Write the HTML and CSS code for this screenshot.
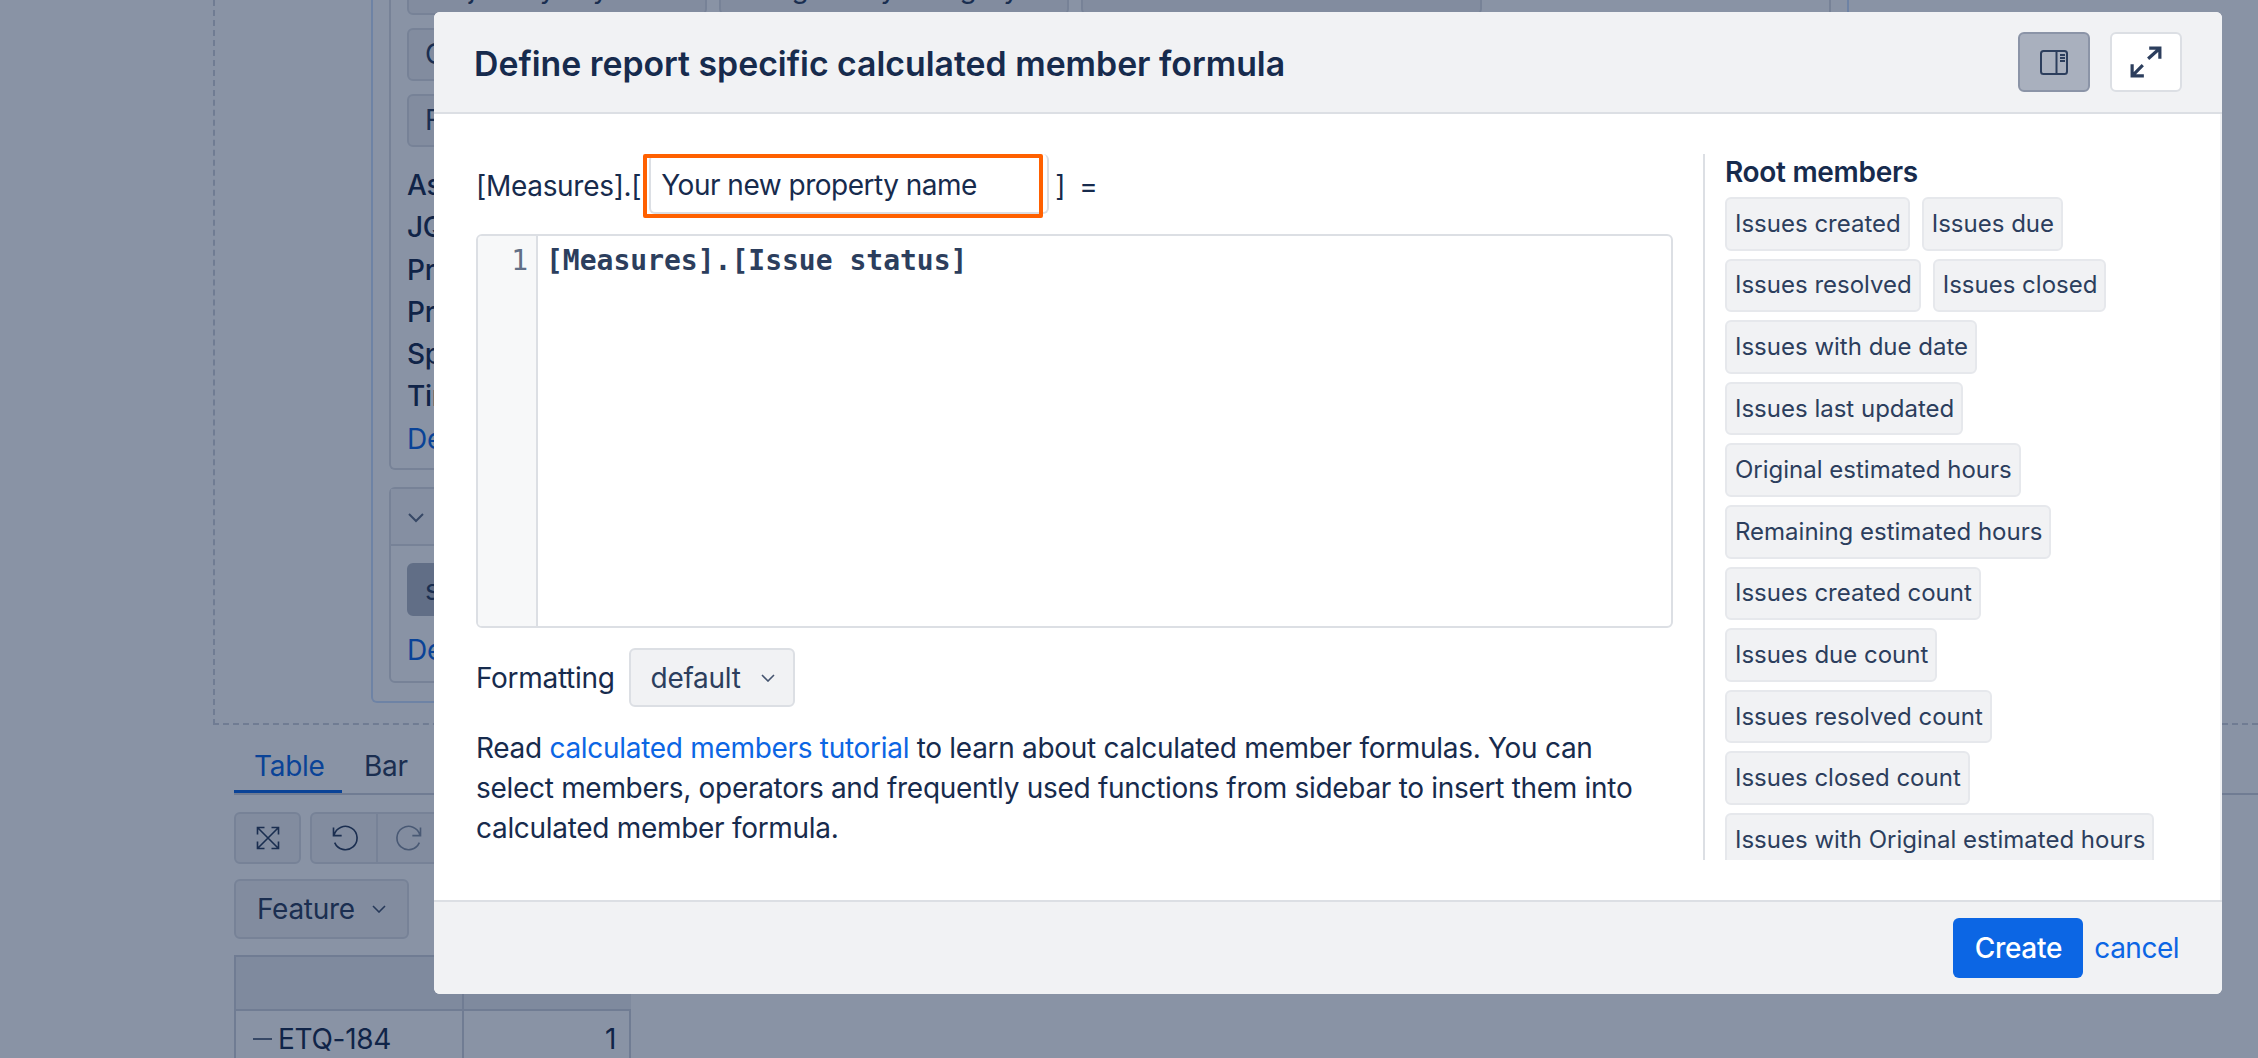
FILE: index.html
```html
<!DOCTYPE html>
<html lang="en">
<head>
<meta charset="utf-8">
<title>Define report specific calculated member formula</title>
<link rel="stylesheet" href="styles.css">
</head>
<body>
<div class="app">
  <div class="stage">
    <div class="blue-panel">
      <div class="panel panel-one">
        <div class="chip-row">
          <span class="bg-chip w300">Project by key</span>
          <span class="bg-chip w350">Assignee by category</span>
          <span class="bg-chip w401"></span>
        </div>
        <div class="chip-row"><span class="bg-chip w300">Creator</span></div>
        <div class="chip-row"><span class="bg-chip w300">Fix version</span></div>
        <ul class="labels">
          <li>Assignee</li>
          <li>JQL query</li>
          <li>Project</li>
          <li>Priority</li>
          <li>Sprint</li>
          <li>Time</li>
          <li class="bg-link">Details</li>
        </ul>
      </div>
      <div class="panel panel-two">
        <div class="panel-head">
          <svg class="chev-bg" viewBox="0 0 16 10"><path d="M1 1l7 7 7-7"/></svg>
        </div>
        <div class="panel-content">
          <span class="bg-chip w300 bg-chip-strong">sprint</span>
          <div class="bg-link">Details</div>
        </div>
      </div>
    </div>
  </div>
  <div class="below">
    <div class="tabs">
      <span class="tab tab-active">Table</span>
      <span class="tab">Bar</span>
    </div>
    <div class="toolbar">
      <span class="tool">
        <svg viewBox="0 0 24 24" class="tool-icon"><path d="M3 3l18 18M21 3L3 21M3 9V3h6M15 3h6v6M21 15v6h-6M9 21H3v-6"/></svg>
      </span>
      <span class="tool-group">
        <span class="tool-cell">
          <svg viewBox="0 0 24 24" class="tool-icon"><path d="M3 3v7h7M3.5 9.5A10 10 0 1 1 4 16"/></svg>
        </span>
        <span class="tool-cell tool-off">
          <svg viewBox="0 0 24 24" class="tool-icon"><path d="M21 3v7h-7M20.500 9.500A10 10 0 1 0 20 16"/></svg>
        </span>
      </span>
    </div>
    <div class="feature">Feature
      <svg class="chev" viewBox="0 0 14 8"><path d="M1 1l6 6 6-6"/></svg>
    </div>
    <div class="bg-table">
      <div class="bg-head"></div>
      <div class="bg-head bg-head-text">Issues</div>
      <div class="bg-cell"><span class="dash"></span>ETQ-184</div>
      <div class="bg-cell bg-num">1</div>
    </div>
  </div>
  <div class="overlay"></div>
</div>

<section class="modal">
  <header class="modal-head">
    <h1 class="modal-title">Define report specific calculated member formula</h1>
    <div class="head-actions">
      <button class="icon-btn icon-btn-on" type="button" aria-label="Toggle sidebar">
        <svg class="icon-panel" viewBox="0 0 28 25"><rect x="1" y="1" width="26" height="23" rx="2.500"/><path d="M16.500 1v23M20 5h5M20 8h5M20 11h5"/></svg>
      </button>
      <button class="icon-btn" type="button" aria-label="Full screen">
        <svg class="icon-expand" viewBox="0 0 30 30"><path d="M17 12L27 3M18 2h10v10M12 18L3 27M2 17v11h11"/></svg>
      </button>
    </div>
  </header>
  <div class="modal-body">
    <div class="main-col">
      <div class="name-row">
        <span class="name-text">[Measures].[</span>
        <span class="name-field">
          <input class="name-input" type="text" value="Your new property name">
          <span class="highlight"></span>
        </span>
        <span class="name-text bracket">]</span>
        <span class="name-text equals">=</span>
      </div>
      <div class="editor">
        <div class="gutter">1</div>
        <div class="code">[Measures].[Issue status]</div>
      </div>
      <div class="format-row">
        <span>Formatting</span>
        <span class="select">default
          <svg class="chev" viewBox="0 0 14 8"><path d="M1 1l6 6 6-6"/></svg>
        </span>
      </div>
      <p class="help">Read <a href="#" class="link">calculated members tutorial</a> to learn about calculated member formulas. You can select members, operators and frequently used functions from sidebar to insert them into calculated member formula.</p>
    </div>
    <aside class="side">
      <h2 class="side-title">Root members</h2>
      <div class="chips">
        <span class="chip">Issues created</span>
        <span class="chip">Issues due</span>
        <span class="chip">Issues resolved</span>
        <span class="chip">Issues closed</span>
        <span class="chip">Issues with due date</span>
        <span class="chip">Issues last updated</span>
        <span class="chip">Original estimated hours</span>
        <span class="chip">Remaining estimated hours</span>
        <span class="chip">Issues created count</span>
        <span class="chip">Issues due count</span>
        <span class="chip">Issues resolved count</span>
        <span class="chip">Issues closed count</span>
        <span class="chip">Issues with Original estimated hours</span>
      </div>
    </aside>
  </div>
  <footer class="modal-foot">
    <button class="create" type="button">Create</button>
    <a href="#" class="link cancel">cancel</a>
  </footer>
</section>
</body>
</html>
```
FILE: styles.css
```css
* { box-sizing: border-box; }
html, body { margin: 0; padding: 0; }
body {
  width: 2258px;
  height: 1058px;
  overflow: hidden;
  position: relative;
  background: #fff;
  font-family: Inter, "Liberation Sans", sans-serif;
  font-size: 28px;
  line-height: 40px;
  letter-spacing: -0.3px;
  color: #172b4d;
}

/* Page behind the modal */
.app {
  height: 1058px;
  padding-left: 213px;
  overflow: hidden;
}
.overlay {
  position: absolute;
  inset: 0;
  background: rgba(9, 30, 66, 0.48);
}
.stage {
  height: 725px;
  border-left: 2px dashed #d0d4dc;
  border-bottom: 2px dashed #d0d4dc;
  padding: 0 0 20px 156px;
  display: flex;
  flex-direction: column;
  justify-content: flex-end;
  overflow: hidden;
}
.blue-panel {
  flex: none;
  width: 1478px;
  border: 2px solid #cce0ff;
  border-top: 0;
  border-radius: 0 0 6px 6px;
  padding: 0 16px 18px;
  display: flex;
  flex-direction: column;
  gap: 17px;
}
.panel {
  border: 2px solid #dcdfe4;
  border-radius: 6px;
}
.panel-one {
  border-top: 0;
  border-radius: 0 0 6px 6px;
  padding: 0 16px 8px;
}
.chip-row {
  display: flex;
  gap: 12px;
  margin-bottom: 13px;
}
.bg-chip {
  height: 53px;
  padding: 0 16px;
  border: 2px solid #dcdfe4;
  border-radius: 6px;
  background: #f1f2f4;
  color: #2c3e5d;
  display: flex;
  align-items: center;
}
.w300 { width: 300px; }
.w350 { width: 350px; }
.w401 { width: 401px; }
.bg-chip-strong { background: #b3b9c4; border-color: #b3b9c4; }
.labels {
  list-style: none;
  margin: 17px 0 0;
  padding: 0;
}
.labels li {
  height: 42.3px;
  line-height: 42px;
  font-weight: 500;
}
.labels .bg-link { font-weight: 400; }
.bg-link { color: #0c66e4; }
.panel-head {
  height: 57px;
  background: #f7f8f9;
  border-bottom: 2px solid #dcdfe4;
  padding: 2px 0 0 17px;
  display: flex;
  align-items: center;
}
.chev-bg {
  width: 16px;
  height: 10px;
  fill: none;
  stroke: #626f86;
  stroke-width: 2;
}
.panel-content { padding: 17px 16px 11px; }
.panel-content .bg-link { margin-top: 14px; }

.below { padding-left: 21px; }
.tabs {
  height: 70px;
  border-bottom: 2px solid #d0d4dc;
  display: flex;
  align-items: flex-end;
}
.tab {
  height: 70px;
  padding: 23px 22px 0;
  color: #2c3e5d;
}
.tab-active {
  width: 108px;
  padding: 23px 20px 0;
  color: #0c66e4;
  border-bottom: 3px solid #0c66e4;
}
.toolbar {
  margin-top: 17px;
  height: 50px;
  display: flex;
  gap: 9px;
}
.tool, .tool-group {
  height: 52px;
  background: #f1f2f4;
  border: 2px solid #dcdfe4;
  border-radius: 6px;
  display: flex;
  align-items: center;
  justify-content: center;
}
.tool { width: 67px; }
.tool-group { width: 200px; justify-content: flex-start; }
.tool-cell {
  width: 66px;
  height: 48px;
  border-right: 2px solid #dcdfe4;
  display: flex;
  align-items: center;
  justify-content: center;
}
.tool-icon {
  width: 28px;
  height: 28px;
  fill: none;
  stroke: #2c3e5d;
  stroke-width: 1.400;
}
.tool-off .tool-icon { stroke: #8590a2; }
.feature {
  margin-top: 17px;
  width: 175px;
  height: 60px;
  padding-left: 21px;
  background: #f1f2f4;
  border: 2px solid #dcdfe4;
  border-radius: 6px;
  color: #2c3e5d;
  display: flex;
  align-items: center;
  gap: 17px;
}
.chev {
  width: 14px;
  height: 8px;
  fill: none;
  stroke: #44546f;
  stroke-width: 1.600;
}
.bg-table {
  margin-top: 16px;
  width: 397px;
  border: 2px solid #d0d4dc;
  display: grid;
  grid-template-columns: 228px 167px;
}
.bg-head {
  height: 54px;
  background: #eceef1;
  border-bottom: 2px solid #d0d4dc;
}
.bg-head:first-child { border-right: 2px solid #d0d4dc; }
.bg-head-text {
  padding: 2px 0 0 26px;
  font-size: 24px;
  font-weight: 600;
  color: #2c3e5d;
}
.bg-cell {
  height: 56px;
  padding: 0 0 0 17px;
  border-right: 2px solid #d0d4dc;
  display: flex;
  align-items: center;
}
.dash {
  width: 19px;
  height: 2px;
  margin-right: 6px;
  background: #626f86;
}
.bg-num {
  padding: 0 15px 0 0;
  border-right: 0;
  justify-content: flex-end;
}

/* Modal */
.modal {
  position: absolute;
  left: 434px;
  top: 12px;
  width: 1788px;
  height: 982px;
  background: #fff;
  border-radius: 6px;
  overflow: hidden;
  display: flex;
  flex-direction: column;
}
.modal-head {
  height: 102px;
  flex: none;
  padding: 20px 40px 0;
  background: #f1f2f4;
  border-bottom: 2px solid #dcdfe4;
  display: flex;
  justify-content: space-between;
  align-items: flex-start;
}
.modal-title {
  margin: 2px 0 0;
  font-size: 33.800px;
  line-height: 60px;
  font-weight: 600;
  letter-spacing: 0;
}
.head-actions { display: flex; gap: 20px; }
.icon-btn {
  width: 72px;
  height: 60px;
  padding: 0;
  background: #fff;
  border: 2px solid #dcdfe4;
  border-radius: 6px;
  display: flex;
  align-items: center;
  justify-content: center;
}
.icon-btn-on {
  background: #a9b0be;
  border-color: #8b94a7;
}
.icon-panel {
  width: 28px;
  height: 25px;
  fill: none;
  stroke: #2c3e5d;
  stroke-width: 2;
}
.icon-expand {
  width: 32px;
  height: 32px;
  fill: none;
  stroke: #2c3e5d;
  stroke-width: 3;
}
.modal-body {
  flex: 1;
  min-height: 0;
  padding: 40px 0 40px 42px;
  border-right: 2px solid #f1f2f4;
  display: flex;
}
.main-col { width: 1197px; flex: none; }
.name-row {
  height: 60px;
  display: flex;
  align-items: center;
}
.name-text { padding-top: 4px; }
.name-field {
  position: relative;
  margin-left: 8px;
}
.name-input {
  display: block;
  width: 400px;
  height: 60px;
  padding: 4px 8px 0 10px;
  border: 2px solid #dcdfe4;
  border-top-width: 0;
  border-radius: 6px;
  font: inherit;
  letter-spacing: -0.5px;
  color: #172b4d;
  background: #fff;
  outline: 0;
}
.highlight {
  position: absolute;
  left: -6px;
  top: 0;
  width: 400px;
  height: 64px;
  border: 4px solid #ff6000;
  border-radius: 2px;
}
.bracket { margin-left: 6px; }
.equals { margin-left: 14px; }
.editor {
  margin-top: 20px;
  height: 394px;
  border: 2px solid #dcdfe4;
  border-radius: 6px;
  overflow: hidden;
  display: flex;
}
.gutter {
  width: 60px;
  flex: none;
  padding: 5px 8px 0 0;
  background: #f7f8f9;
  border-right: 2px solid #dcdfe4;
  text-align: right;
  font-family: "DejaVu Sans Mono", monospace;
  font-size: 28px;
  letter-spacing: 0;
  color: #626f86;
}
.code {
  padding: 5px 0 0 8px;
  font-family: "DejaVu Sans Mono", monospace;
  font-size: 28px;
  font-weight: 700;
  letter-spacing: 0;
  color: #2c3e5d;
}
.format-row {
  margin-top: 20px;
  display: flex;
  align-items: center;
  gap: 14px;
}
.select {
  width: 166px;
  height: 59px;
  padding-left: 20px;
  background: #f1f2f4;
  border: 2px solid #dcdfe4;
  border-radius: 6px;
  color: #2c3e5d;
  display: flex;
  align-items: center;
  gap: 20px;
}
.help { margin: 21px 0 0; }
.link { color: #0c66e4; text-decoration: none; }
.cancel { letter-spacing: -0.5px; }
.side {
  margin-left: 30px;
  flex: 1;
  border-left: 2px solid #dcdfe4;
  padding: 0 40px 0 20px;
  overflow: hidden;
}
.side-title {
  margin: 0;
  font-size: 28px;
  line-height: 36px;
  font-weight: 600;
}
.chips {
  margin-top: 7px;
  display: flex;
  flex-wrap: wrap;
  gap: 8px 12px;
}
.chip {
  height: 53.600px;
  padding: 0 7px 0 8px;
  background: #f1f2f4;
  border: 2px solid #e6e8ec;
  border-radius: 6px;
  font-size: 24px;
  letter-spacing: 0;
  color: #2c3e5d;
  display: flex;
  align-items: center;
}
.modal-foot {
  height: 94px;
  flex: none;
  padding-right: 43px;
  background: #f1f2f4;
  border-top: 2px solid #dcdfe4;
  display: flex;
  align-items: center;
  justify-content: flex-end;
  gap: 11px;
}
.create {
  width: 130px;
  height: 60px;
  padding: 0;
  background: #0c66e4;
  border: 0;
  border-radius: 6px;
  color: #fff;
  font: inherit;
  font-weight: 500;
  letter-spacing: inherit;
}
```
